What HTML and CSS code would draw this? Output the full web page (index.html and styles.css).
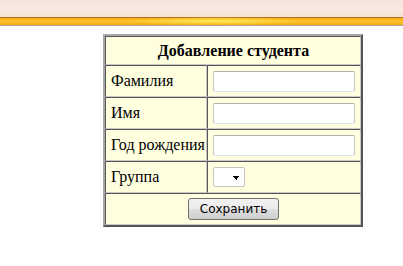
FILE: index.html
```html
<!DOCTYPE html>
<html lang="ru">
<head>
    <meta charset="UTF-8">
    <title>Добавление студента</title>
    <link rel="stylesheet" href="styles.css">
</head>
<body>
    <div class="shapka"></div>
    <form class="forma">
        <table class="tablica">
            <tr>
                <th colspan="2">Добавление студента</th>
            </tr>
            <tr>
                <td class="metka">Фамилия</td>
                <td><input type="text" name="familiya"></td>
            </tr>
            <tr>
                <td class="metka">Имя</td>
                <td><input type="text" name="imya"></td>
            </tr>
            <tr>
                <td class="metka">Год рождения</td>
                <td><input type="text" name="god"></td>
            </tr>
            <tr>
                <td class="metka">Группа</td>
                <td><select name="gruppa"><option></option></select></td>
            </tr>
            <tr>
                <td colspan="2" class="knopki"><button type="submit">Сохранить</button></td>
            </tr>
        </table>
    </form>
</body>
</html>
```
FILE: styles.css
```css
body {
    margin: 0;
    font-family: "Liberation Serif", "Times New Roman", serif;
    background: #fff;
}
.shapka {
    height: 26px;
    background:
        radial-gradient(ellipse 90px 4px at 215px 21px, rgba(255, 240, 90, 0.9), rgba(255, 240, 90, 0)),
        linear-gradient(to bottom,
            #f4e4da 0px, #f7ebe2 10px, #f4e2d2 17px,
            #b8741c 17px, #b8741c 18px,
            #f6a817 18px, #fbc42a 21px, #f7aa17 25px,
            #a8a8a8 25px, #a8a8a8 26px);
}
.forma {
    margin: 8px 0 0 103px;
}
.tablica {
    width: 260px;
    border-spacing: 0;
    border: 2px solid;
    border-color: #a8a8a8 #555 #555 #a8a8a8;
    background: #ffffe0;
}
.tablica th,
.tablica td {
    border: 1px solid;
    border-color: #555 #c8c8c8 #c8c8c8 #555;
    padding: 0 4px 0 5px;
    font-size: 16px;
    color: #000;
}
.tablica th {
    height: 27px;
    font-size: 16px;
}
.tablica td {
    height: 30px;
}
.tablica .metka {
    width: 90px;
    padding: 0 1px 0 5px;
    white-space: nowrap;
}
input {
    width: 142px;
    height: 21px;
    box-sizing: border-box;
    border: 1px solid #c4c4c4;
    border-top-color: #b0b0b0;
    border-bottom-color: #dde3ee;
    border-radius: 2px;
    padding: 1px 3px;
    background: #fff;
}
select {
    appearance: none;
    width: 32px;
    height: 20px;
    font-size: 12px;
    border: 1px solid #c4c4c4;
    border-radius: 2px;
    background-color: #fff;
    background-image: linear-gradient(45deg, transparent 50%, #000 50%), linear-gradient(135deg, #000 50%, transparent 50%);
    background-size: 4px 4px, 4px 4px;
    background-position: 19px 8px, 22px 8px;
    background-repeat: no-repeat;
}
.knopki {
    text-align: center;
}
button {
    font-family: "DejaVu Sans", Tahoma, sans-serif;
    font-size: 12px;
    padding: 1px 11px;
    height: 22px;
    border: 1px solid #707070;
    border-radius: 3px;
    background: linear-gradient(to bottom, #f2f2f2 0%, #ebebeb 50%, #dddddd 51%, #cfcfcf 100%);
    color: #000;
}
```
